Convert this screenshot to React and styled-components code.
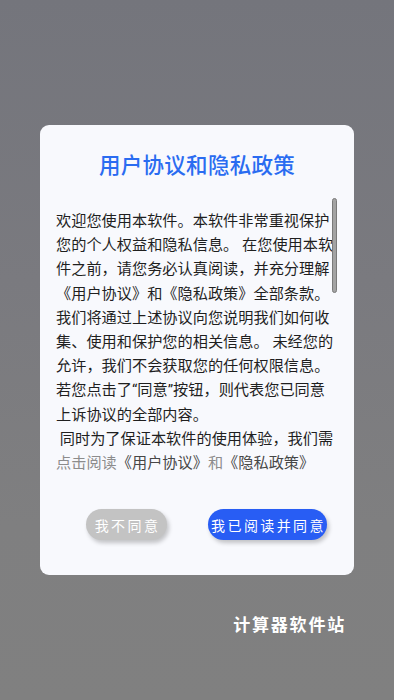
import React from "react";
import styled, { createGlobalStyle } from "styled-components";

const Global = createGlobalStyle`
  html, body { margin: 0; padding: 0; }
  body { font-family: Roboto, "Noto Sans CJK SC", sans-serif; }
`;

const Screen = styled.div`
  width: 394px;
  height: 700px;
  background: linear-gradient(180deg, #74757c 0%, #7a7a7f 40%, #7f7f80 75%, #808080 100%);
  display: flex;
  flex-direction: column;
  overflow: hidden;
`;

const Dialog = styled.div`
  margin: 125px 0 0 40px;
  width: 314px;
  height: 450px;
  box-sizing: border-box;
  background: #f8f9fd;
  border-radius: 9px;
  display: flex;
  flex-direction: column;
`;

const Title = styled.h1`
  margin: 26px 0 0;
  font-family: Roboto, "Noto Sans CJK SC", sans-serif;
  font-size: 21.5px;
  line-height: 30px;
  font-weight: 500;
  color: #2a6cf1;
  text-align: center;
  letter-spacing: 0.3px;
`;

const ScrollArea = styled.div`
  position: relative;
  margin: 17px 0 0 16px;
  width: 282px;
  height: 252px;
`;

const Scroll = styled.div`
  width: 100%;
  height: 100%;
  box-sizing: border-box;
  padding: 11px 0 0 0;
  overflow-y: auto;
  scrollbar-width: none;
  &::-webkit-scrollbar { display: none; }
  font-size: 15.2px;
  line-height: 24.2px;
  color: #1f1f1f;
  white-space: pre-wrap;
`;

const Thumb = styled.div`
  position: absolute;
  right: 1px;
  top: 0;
  width: 5px;
  height: 95px;
  box-sizing: border-box;
  background: #a3a3a3;
  border: 1px solid #7a7a7a;
  border-radius: 3px;
`;

const Links = styled.div`
  margin: 1px 0 0 16px;
  font-size: 15.2px;
  line-height: 24px;
  color: #8c8c8c;
`;

const Link = styled.span`
  color: #474747;
`;

const Buttons = styled.div`
  display: flex;
  gap: 41px;
  margin: 34px 0 0 46px;
`;

const Btn = styled.button`
  height: 31px;
  width: ${(p) => p.$w}px;
  border: none;
  border-radius: 16px;
  padding: 0 0 0 2px;
  background: ${(p) => (p.$primary ? "#285df4" : "#c3c3c3")};
  color: #fff;
  font-family: Roboto, "Noto Sans CJK SC", sans-serif;
  font-size: 14px;
  letter-spacing: 2.4px;
  box-shadow: 2px 3px 4px rgba(0, 0, 0, 0.22);
`;

const Footer = styled.div`
  margin: 38px 48px 0 0;
  align-self: flex-end;
  font-size: 17px;
  line-height: 24px;
  font-weight: 700;
  color: #ffffff;
  letter-spacing: 1.8px;
`;

const body =
  "欢迎您使用本软件。本软件非常重视保护您的个人权益和隐私信息。 在您使用本软件之前，请您务必认真阅读，并充分理解《用户协议》和《隐私政策》全部条款。我们将通过上述协议向您说明我们如何收集、使用和保护您的相关信息。 未经您的允许，我们不会获取您的任何权限信息。若您点击了“同意”按钮，则代表您已同意上诉协议的全部内容。\n 同时为了保证本软件的使用体验，我们需要获取您的设备信息、存储权限等必要权限，用于保存您的计算记录和个人设置。我们不会将您的个人信息提供给任何第三方，也不会用于其他用途。\n 如您对本协议有任何疑问，可通过软件内的意见反馈功能与我们联系，我们将尽快为您解答。请您在充分理解并同意上述内容后再开始使用本软件，感谢您的信任与支持。";

export default function App() {
  return (
    <>
      <Global />
      <Screen>
        <Dialog>
          <Title>用户协议和隐私政策</Title>
          <ScrollArea>
            <Scroll>{body}</Scroll>
            <Thumb />
          </ScrollArea>
          <Links>
            点击阅读<Link>《用户协议》</Link>和<Link>《隐私政策》</Link>
          </Links>
          <Buttons>
            <Btn $w={81}>我不同意</Btn>
            <Btn $w={119} $primary>
              我已阅读并同意
            </Btn>
          </Buttons>
        </Dialog>
        <Footer>计算器软件站</Footer>
      </Screen>
    </>
  );
}
